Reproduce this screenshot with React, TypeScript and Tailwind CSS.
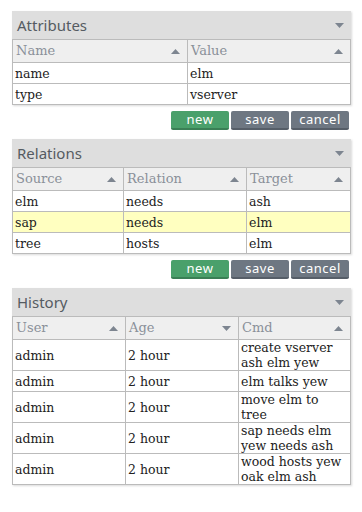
import React from "react";

const serif = { fontFamily: '"DejaVu Serif", serif' };

const Tri = ({ up = true }: { up?: boolean }) => (
  <svg width="9" height="5" viewBox="0 0 9 5" className="shrink-0">
    {up ? <polygon points="0,5 9,5 4.5,0" fill="#7d8590" /> : <polygon points="0,0 9,0 4.5,5" fill="#7d8590" />}
  </svg>
);

type Col = { name: string; w: string; down?: boolean };

const Panel = ({
  title,
  cols,
  rows,
  hl,
}: {
  title: string;
  cols: Col[];
  rows: string[][];
  hl?: number;
}) => (
  <div className="shadow-[1px_1px_2px_rgba(0,0,0,0.15)]">
    <div className="h-[28px] bg-[#dedede] flex items-center justify-between pl-[5px] pr-[7px]">
      <span className="text-[15px] text-[#555b62]">{title}</span>
      <Tri up={false} />
    </div>
    <table style={serif} className="w-full border-collapse border border-[#bbb] table-fixed">
      <thead>
        <tr>
          {cols.map((c) => (
            <th
              key={c.name}
              className={`${c.w} h-[23px] bg-[#efefef] border border-[#bbb] font-normal text-left px-[3px] text-[13px] text-[#8a9099]`}
            >
              <div className="flex items-center justify-between pr-[4px]">
                <span>{c.name}</span>
                <Tri up={!c.down} />
              </div>
            </th>
          ))}
        </tr>
      </thead>
      <tbody>
        {rows.map((r, i) => (
          <tr key={i} className={i === hl ? "bg-[#ffffc0]" : "bg-white"}>
            {r.map((v, j) => (
              <td key={j} className="border border-[#bbb] h-[21px] px-[2px] leading-[15px] text-[12.5px] text-[#222] align-middle">
                {v.split("\n").map((l, k) => (
                  <div key={k}>{l}</div>
                ))}
              </td>
            ))}
          </tr>
        ))}
      </tbody>
    </table>
  </div>
);

const Btn = ({ label, green }: { label: string; green?: boolean }) => (
  <button
    className={`w-[58px] h-[19px] rounded-[2px] border-b-2 text-white text-[13px] leading-[17px] tracking-[0.5px] ${
      green ? "bg-[#4aa06b] border-[#3a7f55]" : "bg-[#6e7782] border-[#565e68]"
    }`}
  >
    {label}
  </button>
);

const Buttons = () => (
  <div className="flex justify-end gap-[2px] pr-[2px] mt-[6px]">
    <Btn label="new" green />
    <Btn label="save" />
    <Btn label="cancel" />
  </div>
);

export default function App() {
  return (
    <div className="w-[362px] min-h-[512px] bg-white pt-[11px] pl-[12px] pr-[11px]">
      <Panel
        title="Attributes"
        cols={[
          { name: "Name", w: "w-[175px]" },
          { name: "Value", w: "" },
        ]}
        rows={[
          ["name", "elm"],
          ["type", "vserver"],
        ]}
      />
      <Buttons />
      <div className="mt-[9px]">
        <Panel
          title="Relations"
          cols={[
            { name: "Source", w: "w-[111px]" },
            { name: "Relation", w: "w-[123px]" },
            { name: "Target", w: "" },
          ]}
          rows={[
            ["elm", "needs", "ash"],
            ["sap", "needs", "elm"],
            ["tree", "hosts", "elm"],
          ]}
          hl={1}
        />
      </div>
      <Buttons />
      <div className="mt-[9px]">
        <Panel
          title="History"
          cols={[
            { name: "User", w: "w-[113px]" },
            { name: "Age", w: "w-[113px]", down: true },
            { name: "Cmd", w: "" },
          ]}
          rows={[
            ["admin", "2 hour", "create vserver\nash elm yew"],
            ["admin", "2 hour", "elm talks yew"],
            ["admin", "2 hour", "move elm to tree"],
            ["admin", "2 hour", "sap needs elm\nyew needs ash"],
            ["admin", "2 hour", "wood hosts yew\noak elm ash"],
          ]}
        />
      </div>
    </div>
  );
}
